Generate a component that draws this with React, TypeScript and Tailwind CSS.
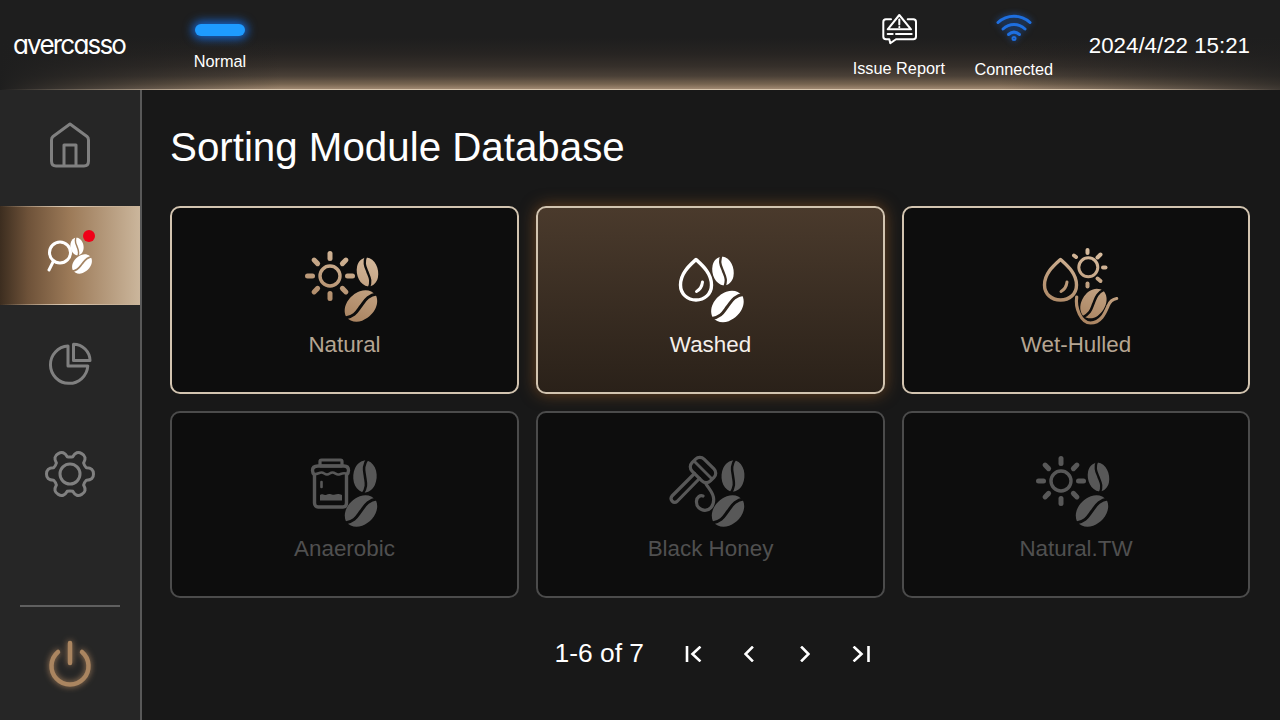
import { useId, type ReactNode } from "react";

type Paint = "tan" | "white" | "gray";

function Glyph({ paint, w = 90, h = 78, children }: { paint: Paint; w?: number; h?: number; children: ReactNode }) {
  const id = useId().replace(/[^a-zA-Z0-9]/g, "");
  const fill = paint === "white" ? "#ffffff" : paint === "gray" ? "#585858" : `url(#g${id})`;
  return (
    <svg width={w} height={h} viewBox={`0 0 ${w} ${h}`} fill="none">
      <defs>
        <linearGradient id={`g${id}`} gradientUnits="userSpaceOnUse" x1="60" y1="0" x2="30" y2="78">
          <stop offset="0" stopColor="#d8bda0" />
          <stop offset="1" stopColor="#a27a56" />
        </linearGradient>
        <mask id={`m${id}`} maskUnits="userSpaceOnUse" x="0" y="0" width={w} height={h}>
          <g stroke="#fff" fill="none" strokeLinecap="round" strokeLinejoin="round">
            {children}
          </g>
        </mask>
      </defs>
      <rect width={w} height={h} fill={fill} mask={`url(#m${id})`} />
    </svg>
  );
}

// white body, black groove: only used inside a mask
function Bean({ x, y, r, s }: { x: number; y: number; r: number; s: number }) {
  return (
    <g transform={`translate(${x} ${y}) rotate(${r}) scale(${s})`}>
      <path
        d="M-18 5C-19 -6 -7 -14.5 4 -14.5C11 -14.5 16 -11 18 -5C19 6 7 14.5 -4 14.5C-11 14.5 -16 11 -18 5Z"
        fill="#fff"
        stroke="none"
      />
      <path d="M-20 6C-9 8 -5 3 0 0C5 -3 9 -8 20 -6" stroke="#000" strokeWidth="3" fill="none" />
    </g>
  );
}

function Sun({ x, y, rays }: { x: number; y: number; rays: number[] }) {
  return (
    <g>
      <circle cx={x} cy={y} r="10" strokeWidth="3.4" />
      {rays.map((a) => {
        const c = Math.cos((a * Math.PI) / 180);
        const s = Math.sin((a * Math.PI) / 180);
        return (
          <line key={a} x1={x + c * 17.5} y1={y + s * 17.5} x2={x + c * 22.5} y2={y + s * 22.5} strokeWidth="5" />
        );
      })}
    </g>
  );
}

function NaturalIcon({ paint }: { paint: Paint }) {
  return (
    <Glyph paint={paint}>
      <Sun x={30} y={28} rays={[0, 45, 90, 135, 180, 225, 270, 315]} />
      <Bean x={67.5} y={24} r={-78} s={0.78} />
      <Bean x={61} y={58} r={-20} s={0.98} />
    </Glyph>
  );
}

function WashedIcon({ paint }: { paint: Paint }) {
  return (
    <Glyph paint={paint}>
      <path d="M30 11.5C24 17 14.5 25 14.5 37C14.5 46 21.5 52 30 52C38.5 52 45.5 46 45.5 37C45.5 25 36 17 30 11.5Z" strokeWidth="3.4" />
      <path d="M36.5 34C36 38.5 34 41.5 30.5 43.5" strokeWidth="3" />
      <Bean x={57} y={23} r={-78} s={0.78} />
      <Bean x={61.5} y={58.5} r={-20} s={0.98} />
    </Glyph>
  );
}

function WetHulledIcon({ paint }: { paint: Paint }) {
  return (
    <Glyph paint={paint}>
      <path d="M29.5 11.5C23.5 17 13.5 25 13.5 37C13.5 46 20.5 52 29.5 52C38.5 52 45.5 46 45.5 37C45.5 25 35.5 17 29.5 11.5Z" strokeWidth="3.4" />
      <path d="M36 34C35.5 38.5 33.5 41.5 30 43.5" strokeWidth="3" />
      <circle cx="57.3" cy="19.3" r="9.5" strokeWidth="3" />
      <g strokeWidth="4">
        <line x1="56.5" y1="2" x2="56.5" y2="5" />
        <line x1="69.5" y1="6.5" x2="66.5" y2="9.5" />
        <line x1="72" y1="19.5" x2="74.5" y2="19.5" />
        <line x1="66.5" y1="30.5" x2="69.5" y2="33" />
        <line x1="56.5" y1="35.5" x2="56.5" y2="38.5" />
        <line x1="43" y1="7.5" x2="45" y2="9" />
      </g>
      <Bean x={62.5} y={55.5} r={-35} s={0.86} />
      <path d="M45.7 49C44 60 50 75 59.5 75C70 75 74 65 77 58C79 53 82 51 85.7 50.5" strokeWidth="3.2" />
    </Glyph>
  );
}

function AnaerobicIcon({ paint }: { paint: Paint }) {
  return (
    <Glyph paint={paint}>
      <rect x="20" y="7" width="22" height="6" rx="1.5" strokeWidth="3.2" />
      <path d="M18 13H44C47 13 48.5 15 48.5 17.5C48.5 20 47.5 21 46.5 22V50C46.5 52.5 45 54 43 54H18C16 54 14.5 52.5 14.5 50V22C13.5 21 12.5 20 12.5 17.5C12.5 15 14 13 18 13Z" strokeWidth="3.4" />
      <path d="M15 21C18 21 19 19.5 21.5 19.5C24 19.5 24.5 21.5 27 21.5C29.5 21.5 30 19.5 32.5 19.5C35 19.5 36 21.5 38 21.5C40.5 21.5 42 19.5 46 20.5" strokeWidth="2.6" />
      <line x1="21.5" y1="29" x2="21.5" y2="34" strokeWidth="2.6" />
      <path d="M20 42C22 40.5 23 42 25 42C27 42 27.5 40.5 30 41C32 41.5 33 42 35 41.5C37 41 38.5 40.5 42 42V47.5H20Z" fill="#fff" stroke="none" />
      <Bean x={65} y={23.5} r={-65} s={0.86} />
      <Bean x={61} y={58} r={-20} s={0.98} />
    </Glyph>
  );
}

function BlackHoneyIcon({ paint }: { paint: Paint }) {
  return (
    <Glyph paint={paint}>
      <g transform="rotate(45 37 17)">
        <rect x="24" y="8.5" width="26" height="17" rx="6" strokeWidth="3.2" />
        <line x1="25" y1="17" x2="49" y2="17" strokeWidth="2.8" />
      </g>
      <path d="M28.5 20.5L6 43Q4 45.5 6 48Q8.5 50.5 11 48.5L33.5 25.5" strokeWidth="3.2" />
      <path d="M40 31C43 36 47.7 40 47.7 46.5C47.7 53 44 57.3 39 57.3C34 57.3 30 53.5 30.5 48C31 44 34 42 37 43" strokeWidth="3.2" />
      <Bean x={67} y={23} r={-65} s={0.84} />
      <Bean x={62} y={58} r={-20} s={0.98} />
    </Glyph>
  );
}

function gearPath() {
  const cx = 28;
  const cy = 25;
  const pt = (deg: number, rad: number) => {
    const a = (deg * Math.PI) / 180;
    return `${(cx + Math.cos(a) * rad).toFixed(2)} ${(cy + Math.sin(a) * rad).toFixed(2)}`;
  };
  let d = `M${pt(-21, 17.5)}`;
  for (let i = 0; i < 6; i++) {
    const a = i * 60;
    d += `Q${pt(a - 15, 24.5)} ${pt(a, 23.5)}`;
    d += `Q${pt(a + 15, 24.5)} ${pt(a + 21, 17.5)}`;
    d += `Q${pt(a + 30, 16.5)} ${pt(a + 39, 17.5)}`;
  }
  return d + "Z";
}

const cards = [
  { label: "Natural", Icon: NaturalIcon, kind: "on" },
  { label: "Washed", Icon: WashedIcon, kind: "active" },
  { label: "Wet-Hulled", Icon: WetHulledIcon, kind: "on" },
  { label: "Anaerobic", Icon: AnaerobicIcon, kind: "off" },
  { label: "Black Honey", Icon: BlackHoneyIcon, kind: "off" },
  { label: "Natural.TW", Icon: NaturalIcon, kind: "off" },
];

function Card({ label, Icon, kind }: (typeof cards)[number]) {
  const box =
    kind === "active"
      ? "border-[#d2c4b0] bg-[linear-gradient(180deg,#4a3a2c,#2a2119)] shadow-[0_0_16px_rgba(190,110,40,0.5)]"
      : kind === "on"
        ? "border-[#d2c4b0] bg-[#0d0d0d]"
        : "border-[#4b4b4b] bg-[#0d0d0d]";
  const text = kind === "active" ? "text-[#f5f0ea]" : kind === "on" ? "text-[#b5a592]" : "text-[#505050]";
  const paint: Paint = kind === "active" ? "white" : kind === "on" ? "tan" : "gray";
  return (
    <div className={`flex h-[187.5px] flex-col items-center rounded-[10px] border-2 pt-[40px] ${box}`}>
      <Icon paint={paint} />
      <div className={`mt-[7.75px] text-[22.4px] leading-[22px] ${text}`}>{label}</div>
    </div>
  );
}

function Sidebar() {
  const grey = "#808080";
  return (
    <div className="flex w-[142px] shrink-0 flex-col border-r-2 border-[#585858] bg-[#262626]">
      {/* Home */}
      <div className="flex h-[116px] items-center justify-center pb-[6px]">
        <svg width="48" height="50" viewBox="0 0 48 50" fill="none" stroke={grey} strokeWidth="3" strokeLinejoin="round">
          <path d="M24 4L41 16.5Q42.5 17.7 42.5 20V41Q42.5 46 38 46H10Q5.5 46 5.5 41V20Q5.5 17.7 7 16.5Z" />
          <path d="M18 46V25H30V46" />
        </svg>
      </div>

      {/* Active item */}
      <div className="relative flex h-[99px] items-center justify-center bg-[linear-gradient(90deg,#3c2d1f_0%,#6e5239_20%,#9c7a58_50%,#cbb69c_100%)] pb-[5px]">
        <div className="absolute inset-x-0 top-0 h-px bg-[linear-gradient(90deg,transparent,#e0cfba_50%,transparent)]" />
        <div className="absolute inset-x-0 bottom-0 h-px bg-[linear-gradient(90deg,transparent,#e0cfba_50%,transparent)]" />
        <Glyph paint="white" w={60} h={50}>
          <circle cx="20" cy="24.5" r="10.5" strokeWidth="3" />
          <line x1="13" y1="34" x2="9" y2="42" strokeWidth="3" />
          <Bean x={37} y={18.5} r={-78} s={0.48} />
          <Bean x={42} y={36} r={-20} s={0.6} />
        </Glyph>
        <div className="absolute left-[83px] top-[24px] h-3 w-3 rounded-full bg-[#f00018]" />
      </div>

      {/* Pie */}
      <div className="flex h-[119px] items-center justify-center">
        <svg width="48" height="50" viewBox="0 0 48 50" fill="none" stroke={grey} strokeWidth="3" strokeLinejoin="round">
          <path d="M22 6A18.7 18.7 0 1 0 41.8 26H22Z" />
          <path d="M27.5 4.2A16.5 16.5 0 0 1 44 20.5H27.5Z" />
        </svg>
      </div>

      {/* Gear */}
      <div className="flex h-[100px] items-center justify-center">
        <svg width="56" height="50" viewBox="0 0 56 50" fill="none" stroke={grey} strokeWidth="3" strokeLinejoin="round">
          <path d={gearPath()} />
          <circle cx="28" cy="25" r="10" />
        </svg>
      </div>

      <div className="ml-[20px] mt-[81px] h-0.5 w-[100px] bg-[#5f5f5f]" />

      {/* Power */}
      <div className="flex flex-1 justify-center pt-[32px]">
        <svg
          width="52"
          height="52"
          viewBox="0 0 52 52"
          fill="none"
          stroke="#aa8560"
          strokeWidth="4.5"
          strokeLinecap="round"
          className="drop-shadow-[0_0_3px_#a9825d]"
        >
          <path d="M14 13A18.5 18.5 0 1 0 38 13" />
          <line x1="26" y1="4" x2="26" y2="24" />
        </svg>
      </div>
    </div>
  );
}

function Header() {
  return (
    <div className="relative flex h-[90px] shrink-0 items-start bg-[linear-gradient(90deg,#1e1e1e_0%,rgba(30,30,30,0)_22%,rgba(30,30,30,0)_78%,rgba(30,30,30,0.75)_100%),linear-gradient(0deg,#a89078_0px,#75634f_6px,#4a4037_14px,#352f2a_24px,#272422_36px,#1e1e1e_52px)] pl-[13px] pr-[30px] text-white">
      <div className="absolute inset-x-0 bottom-0 h-px bg-[linear-gradient(90deg,transparent,#d8c6ae_20%,#d8c6ae_85%,transparent)]" />
      <div className="mt-[25px] w-[167px] font-['Inter',sans-serif] text-[26px] leading-[40px] tracking-[-1.8px] [font-feature-settings:'cv11']">
        avercasso
      </div>
      <div className="flex w-[80px] flex-col items-center">
        <div className="mt-[24px] h-3 w-[50px] rounded-full bg-[#1e9bff] shadow-[0_0_10px_3px_rgba(20,120,255,0.75)]" />
        <div className="mt-[14px] text-[16.3px] leading-[22px]">Normal</div>
      </div>
      <div className="flex-1" />
      <div className="flex w-[100px] flex-col items-center pt-[13px]">
        <svg width="36" height="32" viewBox="0 0 36 32" fill="none" stroke="#fff" strokeWidth="2" strokeLinejoin="round" strokeLinecap="round">
          <path d="M10 6.3H5C3.3 6.3 2.3 7.3 2.3 9V23.5C2.3 25.3 3.3 26.3 5 26.3H8.3L9.3 30.3L15 26.3H32.3C34 26.3 35 25.3 35 23.5V9C35 7.3 34 6.3 32.3 6.3H26.7" />
          <path d="M18.3 2L30 16.3H6.7Z" />
          <line x1="18.3" y1="6.5" x2="18.3" y2="11.5" />
          <line x1="18.3" y1="14" x2="18.3" y2="14.2" />
          <line x1="6.7" y1="21" x2="11.7" y2="21" />
          <line x1="15" y1="21" x2="30.7" y2="21" />
        </svg>
        <div className="mt-[12px] text-[16.3px] leading-[22px]">Issue Report</div>
      </div>
      <div className="ml-[15px] flex w-[100px] flex-col items-center pt-[13px]">
        <svg
          width="36"
          height="30"
          viewBox="0 0 36 30"
          fill="none"
          stroke="#1e6fe0"
          strokeWidth="3"
          strokeLinecap="round"
          className="drop-shadow-[0_0_3px_rgba(30,110,230,0.7)]"
        >
          <path d="M2 9.5C11 1 25 1 34 9.5" />
          <path d="M7 16C13.5 10 22.5 10 29 16" />
          <path d="M12.5 21.5C16 18.5 20 18.5 23.5 21.5" />
          <circle cx="18" cy="25.5" r="1" />
        </svg>
        <div className="mt-[15px] text-[16.3px] leading-[22px]">Connected</div>
      </div>
      <div className="ml-[25px] mt-[32px] text-[22.3px] leading-[28px]">2024/4/22 15:21</div>
    </div>
  );
}

function Pager() {
  return (
    <div className="mt-[41px] flex h-[30px] items-center pl-[384.5px] text-white">
      <div className="w-[110px] pb-[2px] text-[26.4px] leading-[28px]">1-6 of 7</div>
      <div className="flex w-14 justify-center">
        <svg width="18" height="16" viewBox="0 0 18 16" fill="none" stroke="#fff" strokeWidth="2.6" strokeLinecap="square">
          <line x1="3" y1="1" x2="3" y2="15" />
          <path d="M15.5 1.5L8.5 8L15.5 14.5" />
        </svg>
      </div>
      <div className="flex w-14 justify-center">
        <svg width="10" height="16" viewBox="0 0 10 16" fill="none" stroke="#fff" strokeWidth="2.6" strokeLinecap="square">
          <path d="M8 1.5L1.5 8L8 14.5" />
        </svg>
      </div>
      <div className="flex w-14 justify-center">
        <svg width="10" height="16" viewBox="0 0 10 16" fill="none" stroke="#fff" strokeWidth="2.6" strokeLinecap="square">
          <path d="M2 1.5L8.5 8L2 14.5" />
        </svg>
      </div>
      <div className="flex w-14 justify-center">
        <svg width="18" height="16" viewBox="0 0 18 16" fill="none" stroke="#fff" strokeWidth="2.6" strokeLinecap="square">
          <line x1="16.5" y1="1" x2="16.5" y2="15" />
          <path d="M2.5 1.5L9.5 8L2.5 14.5" />
        </svg>
      </div>
    </div>
  );
}

export default function App() {
  return (
    <div className="flex h-[720px] w-[1280px] flex-col overflow-hidden bg-[#181818] font-['Liberation_Sans',Arial,sans-serif]">
      <Header />
      <div className="flex flex-1">
        <Sidebar />
        <div className="flex-1 pl-[28px] pr-[30px] pt-[35px]">
          <h1 className="text-[40.3px] leading-[46px] text-white">Sorting Module Database</h1>
          <div className="mt-[35px] grid grid-cols-[349px_349px_348px] gap-[17px]">
            {cards.map((c) => (
              <Card key={c.label} {...c} />
            ))}
          </div>
          <Pager />
        </div>
      </div>
    </div>
  );
}
